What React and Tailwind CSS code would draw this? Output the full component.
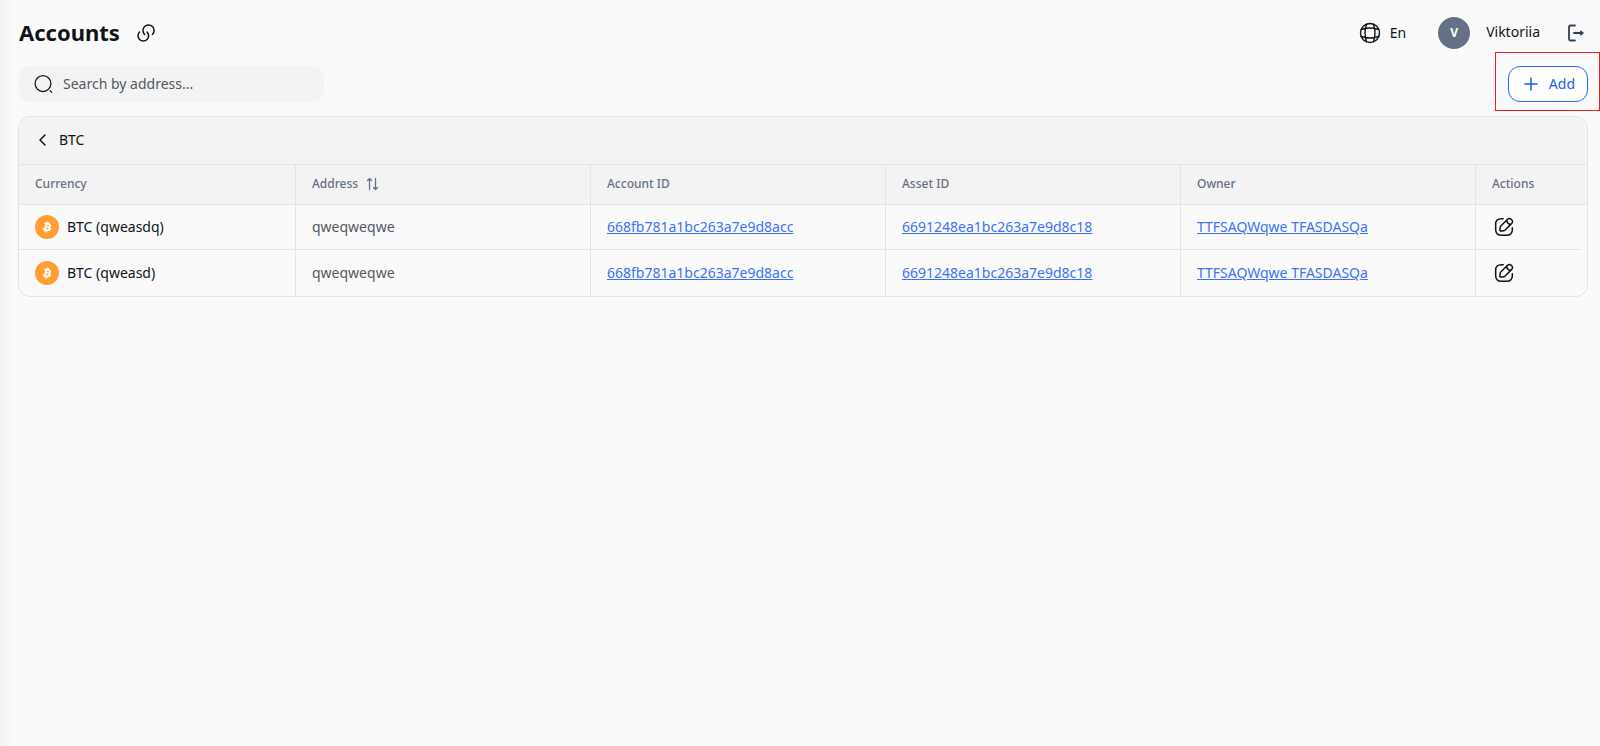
import { useState } from "react";

const accounts = [
  {
    id: 1,
    currency: "BTC (qweasdq)",
    address: "qweqweqwe",
    accountId: "668fb781a1bc263a7e9d8acc",
    assetId: "6691248ea1bc263a7e9d8c18",
    owner: "TTFSAQWqwe TFASDASQa",
  },
  {
    id: 2,
    currency: "BTC (qweasd)",
    address: "qweqweqwe",
    accountId: "668fb781a1bc263a7e9d8acc",
    assetId: "6691248ea1bc263a7e9d8c18",
    owner: "TTFSAQWqwe TFASDASQa",
  },
];

const Icon = ({ className, children, strokeWidth = 1.5, viewBox = "0 0 24 24" }) => (
  <svg
    className={className}
    viewBox={viewBox}
    fill="none"
    stroke="currentColor"
    strokeWidth={strokeWidth}
    strokeLinecap="round"
    strokeLinejoin="round"
    aria-hidden="true"
  >
    {children}
  </svg>
);

const LinkIcon = () => (
  <Icon className="size-6">
    <path d="M13.06 10.94c2.08 2.08 2.08 5.44 0 7.51-2.08 2.07-5.44 2.08-7.51 0-2.07-2.08-2.08-5.44 0-7.51" />
    <path d="M10.59 13.41c-2.17-2.17-2.17-5.69 0-7.85 2.17-2.16 5.69-2.17 7.85 0 2.16 2.17 2.17 5.69 0 7.85" />
  </Icon>
);

const SearchIcon = () => (
  <Icon className="size-5 shrink-0">
    <circle cx="12" cy="11.5" r="9.5" />
    <path d="m22.500 22-2-2" />
  </Icon>
);

const GlobeIcon = () => (
  <Icon className="size-6" strokeWidth={1.4}>
    <circle cx="12" cy="12" r="9.5" />
    <path d="M8.5 3.2a28 28 0 0 0 0 17.6M15.5 3.2a28 28 0 0 1 0 17.6M3.2 15.5a28 28 0 0 0 17.6 0M3.2 8.5a28 28 0 0 1 17.6 0" />
  </Icon>
);

const LogoutIcon = () => (
  <Icon className="size-5" viewBox="0 0 20 20" strokeWidth={1.8}>
    <path d="M9 2.500H4.500A1.500 1.500 0 0 0 3 4v12a1.500 1.500 0 0 0 1.500 1.500H9" />
    <path d="M8 10h7" />
    <path d="m15 8 2.500 2-2.500 2Z" fill="currentColor" strokeWidth={1} />
  </Icon>
);

const EditIcon = () => (
  <Icon className="size-5" strokeWidth={1.8}>
    <path d="M11 2H9C4 2 2 4 2 9v6c0 5 2 7 7 7h6c5 0 7-2 7-7v-2" />
    <path d="M16.040 3.020 8.160 10.900c-.3.300-.6.890-.66 1.320l-.43 3.010c-.16 1.090.61 1.850 1.700 1.700l3.010-.43c.42-.06 1.010-.36 1.320-.66l7.880-7.880c1.360-1.360 2-2.940 0-4.940s-3.580-1.360-4.940 0Z" />
    <path d="M14.910 4.150a7.140 7.140 0 0 0 4.940 4.940" />
  </Icon>
);

const SortIcon = () => (
  <Icon className="size-3.5" viewBox="0 0 14 14" strokeWidth={1.3}>
    <path d="M3.500 12.500v-11M1.500 3.500l2-2 2 2M9.500 1.500v11M7.500 10.500l2 2 2-2" />
  </Icon>
);

const BitcoinIcon = () => (
  <svg className="size-6 shrink-0" viewBox="0 0 32 32" aria-hidden="true">
    <circle cx="16" cy="16" r="16" fill="#ff9f33" />
    <path
      fill="#fff"
      stroke="#fff"
      strokeWidth=".6"
      transform="translate(4.500 4.500) scale(.72)"
      d="M23.189 14.020c.314-2.096-1.283-3.223-3.465-3.975l.708-2.840-1.728-.43-.69 2.765c-.454-.114-.92-.22-1.385-.326l.695-2.783L15.596 6l-.708 2.839c-.376-.086-.746-.17-1.104-.26l.002-.009-2.384-.595-.46 1.846s1.283.294 1.256.312c.7.175.826.638.805 1.006l-.806 3.235c.048.012.11.030.18.057l-.183-.045-1.130 4.532c-.086.212-.303.531-.793.410.018.025-1.256-.313-1.256-.313l-.858 1.978 2.250.561c.418.105.828.215 1.231.318l-.715 2.872 1.727.43.708-2.840c.472.127.930.245 1.378.357l-.706 2.828 1.728.43.715-2.866c2.948.558 5.164.333 6.097-2.333.752-2.146-.037-3.385-1.588-4.192 1.130-.26 1.980-1.003 2.207-2.538zm-3.950 5.538c-.533 2.147-4.148.986-5.320.695l.950-3.805c1.172.293 4.929.872 4.370 3.110zm.535-5.569c-.487 1.953-3.495.960-4.470.717l.860-3.450c.975.243 4.118.696 3.610 2.733z"
    />
  </svg>
);

const Header = () => (
  <header className="flex h-[66px] items-center justify-between pl-[19px] pr-3.5">
    <div className="flex items-center gap-3.5">
      <h1 className="pb-0.5 text-[22px] leading-8 font-bold">Accounts</h1>
      <button type="button" aria-label="Copy link">
        <LinkIcon />
      </button>
    </div>
    <div className="flex items-center">
      <button type="button" className="flex items-center gap-2 text-sm">
        <GlobeIcon />
        En
      </button>
      <span className="ml-8 flex size-8 items-center justify-center rounded-full bg-[#667085] text-xs font-bold text-white">
        V
      </span>
      <span className="ml-4 pb-0.5 text-sm">Viktoriia</span>
      <button type="button" aria-label="Log out" className="ml-6.5 text-[#344054]">
        <LogoutIcon />
      </button>
    </div>
  </header>
);

const Toolbar = () => {
  const [search, setSearch] = useState("");

  return (
    <div className="flex items-center justify-between pl-[19px] pr-3">
      <label className="flex h-9 w-[305px] items-center gap-2.5 rounded-xl bg-[#f3f3f3] px-3.5">
        <SearchIcon />
        <input
          type="text"
          aria-label="Search by address"
          placeholder="Search by address..."
          value={search}
          onChange={(e) => setSearch(e.target.value)}
          className="w-full bg-transparent text-sm outline-none placeholder:text-[#505862]"
        />
      </label>
      <div className="relative">
        <button
          type="button"
          className="flex h-9 items-center gap-2 rounded-xl border border-[#2563ff] bg-white px-3 text-sm text-[#155eef]"
        >
          <Icon className="size-5" viewBox="0 0 20 20">
            <path d="M10 4v12M4 10h12" />
          </Icon>
          Add
        </button>
        <span className="pointer-events-none absolute -bottom-[9px] -left-[13px] -right-3 -top-3.5 border border-[#f02020]" />
      </div>
    </div>
  );
};

const HeadCell = ({ children }) => (
  <th scope="col" className="border-r border-[#dfe4ee] pb-0.5 pl-4 text-left font-medium last:border-r-0">
    {children}
  </th>
);

const LinkCell = ({ children }) => (
  <td className="border-b border-r border-[#dfe4ee] pl-4">
    <a href="#" className="text-[#3b72f6] underline">
      {children}
    </a>
  </td>
);

const AccountsTable = () => (
  <section className="ml-[18px] mr-3 mt-3.5 overflow-hidden rounded-xl border border-[#dfe4ee]">
    <div className="flex h-12 items-center border-b border-[#dfe4ee] bg-[#f3f3f3] pb-0.5 pl-4">
      <button type="button" className="flex items-center gap-2 text-sm">
        <Icon className="size-4" viewBox="0 0 16 16">
          <path d="M10 3 5 8l5 5" />
        </Icon>
        BTC
      </button>
    </div>
    <table className="w-full table-fixed border-separate border-spacing-0 text-sm">
      <colgroup>
        <col className="w-[277px]" />
        <col />
        <col />
        <col />
        <col />
        <col className="w-[111px]" />
      </colgroup>
      <thead>
        <tr className="h-10 bg-[#f3f3f3] text-xs text-[#667085] [&>th]:border-b">
          <HeadCell>Currency</HeadCell>
          <HeadCell>
            <button type="button" className="flex items-center gap-2">
              Address
              <SortIcon />
            </button>
          </HeadCell>
          <HeadCell>Account ID</HeadCell>
          <HeadCell>Asset ID</HeadCell>
          <HeadCell>Owner</HeadCell>
          <HeadCell>Actions</HeadCell>
        </tr>
      </thead>
      <tbody className="[&>tr:last-child>td]:border-b-0">
        {accounts.map((account, index) => (
          <tr key={account.id} className="h-[45px]">
            <td className="border-b border-r border-[#dfe4ee] pl-4">
              <div className="flex items-center gap-2">
                <BitcoinIcon />
                {account.currency}
              </div>
            </td>
            <td className="border-b border-r border-[#dfe4ee] pl-4 text-[#505862]">{account.address}</td>
            <LinkCell>{account.accountId}</LinkCell>
            <LinkCell>{account.assetId}</LinkCell>
            <LinkCell>{account.owner}</LinkCell>
            <td className="p-0">
              <div
                className={
                  index < accounts.length - 1
                    ? "mr-1.5 flex h-[45px] items-center border-b border-[#dfe4ee] pl-[18px]"
                    : "flex h-[46px] items-center pl-[18px]"
                }
              >
                <button type="button" aria-label="Edit account">
                  <EditIcon />
                </button>
              </div>
            </td>
          </tr>
        ))}
      </tbody>
    </table>
  </section>
);

export default function App() {
  return (
    <div className="min-h-screen bg-[#fafafa] bg-[linear-gradient(to_right,#f4f4f4,#fafafa_17px)] font-['Noto_Sans',sans-serif] text-[#101418]">
      <Header />
      <Toolbar />
      <AccountsTable />
    </div>
  );
}
